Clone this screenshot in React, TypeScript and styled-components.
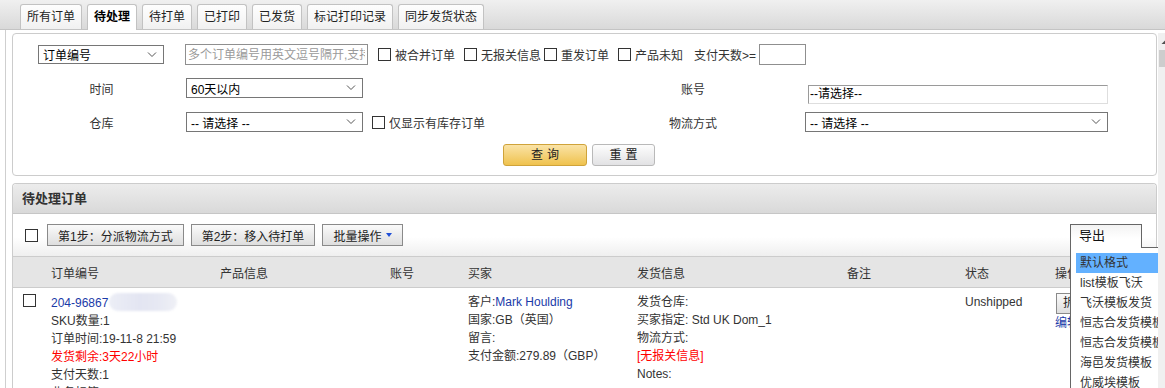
import styled, { createGlobalStyle } from 'styled-components';

const GlobalStyle = createGlobalStyle`
  html, body {
    margin: 0;
    padding: 0;
    background: #fff;
    overflow: hidden;
  }
  body {
    font-family: "Liberation Sans", "Noto Sans CJK SC", Arial, sans-serif;
    font-size: 12px;
    color: #333;
  }
  * { box-sizing: border-box; }
`;

const tabs = ['所有订单', '待处理', '待打单', '已打印', '已发货', '标记打印记录', '同步发货状态'];
const exportItems = ['默认格式', 'list模板飞沃', '飞沃模板发货', '恒志合发货模板', '恒志合发货模板', '海邑发货模板', '优威埃模板'];
const columns = ['', '订单编号', '产品信息', '账号', '买家', '发货信息', '备注', '状态', '操作'];

const Chevron = () => (
    <svg width="10" height="6" viewBox="0 0 10 6">
        <path d="M1 0.5 L5 4.5 L9 0.5" fill="none" stroke="#555" strokeWidth="1" />
    </svg>
);

const Select = ({ w, h, children }: { w: number; h: number; children: string }) => (
    <SelectBox $w={w} $h={h}>
        <span>{children}</span>
        <Chevron />
    </SelectBox>
);

const Check = ({ label, ml = 0 }: { label?: string; ml?: number }) => (
    <CheckItem $ml={ml}>
        <Box />
        {label && <span>{label}</span>}
    </CheckItem>
);

const App = () => {
    return (
        <Page>
            <GlobalStyle />
            <TabBar>
                {tabs.map((t, i) => (
                    <Tab key={t} $active={i === 1}>
                        {t}
                    </Tab>
                ))}
            </TabBar>
            <Main>
                <Content>
                    <SearchPanel>
                        <FirstRow>
                            <Select w={126} h={19}>订单编号</Select>
                            <TextInput
                                $w={183}
                                $ml={21}
                                placeholder="多个订单编号用英文逗号隔开,支持批量查询"
                            />
                            <Check label="被合并订单" ml={10} />
                            <Check label="无报关信息" ml={9} />
                            <Check label="重发订单" ml={3} />
                            <Check label="产品未知" ml={9} />
                            <PlainText $ml={11}>支付天数&gt;=</PlainText>
                            <TextInput $w={47} $ml={3} />
                        </FirstRow>
                        <FormGrid>
                            <Label>时间</Label>
                            <Field>
                                <Select w={177} h={20}>60天以内</Select>
                            </Field>
                            <Field />
                            <Label>账号</Label>
                            <Field>
                                <AccountInput>--请选择--</AccountInput>
                            </Field>
                            <Label>仓库</Label>
                            <Field>
                                <Select w={177} h={20}>-- 请选择 --</Select>
                            </Field>
                            <Field>
                                <Check label="仅显示有库存订单" />
                            </Field>
                            <Label>物流方式</Label>
                            <Field>
                                <Select w={303} h={20}>-- 请选择 --</Select>
                            </Field>
                        </FormGrid>
                        <ButtonRow>
                            <QueryButton>查询</QueryButton>
                            <ResetButton>重置</ResetButton>
                        </ButtonRow>
                    </SearchPanel>

                    <ListPanel>
                        <PanelHeader>待处理订单</PanelHeader>
                        <Toolbar>
                            <Check />
                            <ToolButton $ml={9}>第1步：分派物流方式</ToolButton>
                            <ToolButton $ml={7}>第2步：移入待打单</ToolButton>
                            <ToolButton $ml={7}>
                                批量操作
                                <Caret />
                            </ToolButton>
                        </Toolbar>
                        <ExportDropdown>
                            <ExportTab>导出</ExportTab>
                            <ExportMenu>
                                {exportItems.map((item, i) => (
                                    <MenuItem key={i} $active={i === 0}>
                                        {item}
                                    </MenuItem>
                                ))}
                            </ExportMenu>
                        </ExportDropdown>
                        <TableHead>
                            {columns.map((c, i) => (
                                <span key={i}>{c}</span>
                            ))}
                        </TableHead>
                        <TableRow>
                            <CheckCell>
                                <Check />
                            </CheckCell>
                            <Cell>
                                <div>
                                    <Link>204-96867</Link>
                                    <Blur />
                                </div>
                                <div>SKU数量:1</div>
                                <div>订单时间:19-11-8 21:59</div>
                                <Warn>发货剩余:3天22小时</Warn>
                                <div>支付天数:1</div>
                                <div>业务标签:</div>
                            </Cell>
                            <Cell />
                            <Cell />
                            <Cell>
                                <div>
                                    客户:<Link>Mark Houlding</Link>
                                </div>
                                <div>国家:GB（英国）</div>
                                <div>留言:</div>
                                <div>支付金额:279.89（GBP）</div>
                            </Cell>
                            <Cell>
                                <div>发货仓库:</div>
                                <div>买家指定: Std UK Dom_1</div>
                                <div>物流方式:</div>
                                <Warn>[无报关信息]</Warn>
                                <div>Notes:</div>
                            </Cell>
                            <Cell />
                            <Cell>Unshipped</Cell>
                            <Cell>
                                <OpButton>拆分订单</OpButton>
                                <Link>编辑</Link>
                            </Cell>
                        </TableRow>
                    </ListPanel>
                </Content>
                <Scrollbar>
                    <ScrollArrow>
                        <svg width="15" height="8" viewBox="0 0 15 8">
                            <path d="M3.5 6 L7.5 2 L11.5 6 Z" fill="#505050" />
                        </svg>
                    </ScrollArrow>
                    <Thumb />
                </Scrollbar>
            </Main>
        </Page>
    );
};

export default App;

const Page = styled.div`
    width: 1165px;
    height: 388px;
    overflow: hidden;
    display: flex;
    flex-direction: column;
`;
const TabBar = styled.div`
    height: 30px;
    flex: 0 0 30px;
    display: flex;
    align-items: flex-end;
    gap: 5px;
    padding: 4px 0 0 20px;
    background: linear-gradient(#f0f0f0, #d9d9d9);
    border-bottom: 1px solid #c4c4c4;
`;
const Tab = styled.div<{ $active: boolean }>`
    height: ${({ $active }) => ($active ? '26px' : '25px')};
    margin-bottom: ${({ $active }) => ($active ? '-1px' : '0')};
    padding: 0 6px;
    line-height: 24px;
    border: 1px solid #c2c2c2;
    border-bottom: none;
    border-radius: 3px 3px 0 0;
    background: ${({ $active }) => ($active ? '#fff' : 'linear-gradient(#fefefe, #f1f1f1)')};
    color: ${({ $active }) => ($active ? '#000' : '#222')};
    font-weight: ${({ $active }) => ($active ? 'bold' : 'normal')};
    white-space: nowrap;
`;
const Main = styled.div`
    flex: 1;
    display: flex;
    min-height: 0;
`;
const Content = styled.div`
    flex: 0 0 1153px;
    margin-left: 5px;
    border-left: 1px solid #cfcfcf;
    padding: 3px 0 0 6px;
    overflow: hidden;
`;
const Scrollbar = styled.div`
    flex: 0 0 15px;
    margin-top: 3px;
    background: #f0f0f0;
    display: flex;
    flex-direction: column;
`;
const ScrollArrow = styled.div`
    height: 17px;
    display: flex;
    align-items: center;
`;
const Thumb = styled.div`
    height: 17px;
    margin-left: 1px;
    background: #cdcdcd;
`;
const SearchPanel = styled.div`
    margin-right: 1px;
    border: 1px solid #cccccc;
    border-radius: 4px;
    padding: 10px 0 9px;
`;
const FirstRow = styled.div`
    height: 21px;
    display: flex;
    align-items: center;
    padding-left: 25px;
`;
const SelectBox = styled.div<{ $w: number; $h: number }>`
    width: ${({ $w }) => $w}px;
    height: ${({ $h }) => $h}px;
    border: 1px solid #767676;
    background: #fff;
    color: #000;
    padding: 0 6px 0 4px;
    display: flex;
    align-items: center;
    justify-content: space-between;
    span {
        white-space: nowrap;
    }
`;
const TextInput = styled.input<{ $w: number; $ml: number }>`
    width: ${({ $w }) => $w}px;
    height: 21px;
    margin: 0 0 0 ${({ $ml }) => $ml}px;
    padding: 0 2px;
    border: 1px solid #8f8f8f;
    font: inherit;
    color: #000;
    outline: none;
    &::placeholder {
        color: #9a9a9a;
    }
`;
const CheckItem = styled.label<{ $ml: number }>`
    display: inline-flex;
    align-items: center;
    gap: 4px;
    margin-left: ${({ $ml }) => $ml}px;
    color: #333;
    white-space: nowrap;
`;
const Box = styled.span`
    display: inline-block;
    width: 13px;
    height: 13px;
    border: 1px solid #333;
    background: #fff;
`;
const PlainText = styled.span<{ $ml: number }>`
    margin-left: ${({ $ml }) => $ml}px;
    white-space: nowrap;
`;
const FormGrid = styled.div`
    margin-top: 6px;
    display: grid;
    grid-template-columns: 173px 186px 205px 228px 303px;
    grid-auto-rows: 34px;
    align-items: center;
`;
const Label = styled.div`
    text-align: center;
    padding-left: 4px;
    color: #333;
`;
const Field = styled.div`
    display: flex;
    align-items: center;
`;
const AccountInput = styled.div`
    width: 300px;
    height: 19px;
    margin: 12px 0 0 3px;
    padding-left: 1px;
    line-height: 17px;
    color: #000;
    border: 1px solid #dedede;
    border-top-color: #9a9a9a;
    border-left-color: #9a9a9a;
`;
const ButtonRow = styled.div`
    margin-top: 5px;
    padding-left: 490px;
    display: flex;
    gap: 5px;
`;
const QueryButton = styled.div`
    width: 84px;
    height: 22px;
    line-height: 20px;
    text-align: center;
    letter-spacing: 4px;
    text-indent: 4px;
    color: #222;
    border: 1px solid #cfa33a;
    border-radius: 3px;
    background: linear-gradient(#fae3a6, #efc24e);
`;
const ResetButton = styled(QueryButton)`
    width: 63px;
    border-color: #b9b9b9;
    background: linear-gradient(#fdfdfd, #e2e2e4);
`;
const ListPanel = styled.div`
    position: relative;
    margin: 7px 1px 0 0;
    border: 1px solid #cccccc;
    border-radius: 4px 4px 0 0;
    border-bottom: none;
`;
const PanelHeader = styled.div`
    height: 30px;
    line-height: 29px;
    padding-left: 9px;
    font-size: 13px;
    font-weight: bold;
    color: #333;
    border-radius: 4px 4px 0 0;
    border-bottom: 1px solid #c6c6c6;
    background: linear-gradient(#ececec, #d9d9d9);
`;
const Toolbar = styled.div`
    height: 43px;
    display: flex;
    align-items: center;
    padding-left: 12px;
    border-bottom: 1px solid #cccccc;
    background: linear-gradient(#fff 55%, #efefef);
`;
const ToolButton = styled.div<{ $ml: number }>`
    height: 22px;
    margin-left: ${({ $ml }) => $ml}px;
    padding: 0 10px;
    display: flex;
    align-items: center;
    gap: 5px;
    color: #222;
    border: 1px solid #8a8a8a;
    background: linear-gradient(#fafafa, #dedede);
    white-space: nowrap;
`;
const Caret = styled.span`
    width: 0;
    height: 0;
    border-left: 3.5px solid transparent;
    border-right: 3.5px solid transparent;
    border-top: 4px solid #1f4fd8;
`;
const ExportDropdown = styled.div`
    position: absolute;
    top: 40px;
    left: 1057px;
    z-index: 5;
    display: flex;
    flex-direction: column;
`;
const ExportTab = styled.div`
    position: relative;
    z-index: 1;
    width: 72px;
    height: 24px;
    padding-left: 8px;
    line-height: 22px;
    font-size: 13px;
    color: #111;
    border: 1px solid #666;
    border-bottom: none;
    background: linear-gradient(#f3f3f3, #fff 60%);
`;
const ExportMenu = styled.div`
    width: 120px;
    height: 160px;
    margin-top: -1px;
    padding: 5px 0 0 5px;
    border: 1px solid #666;
    background: #fff;
`;
const MenuItem = styled.div<{ $active: boolean }>`
    height: 20px;
    line-height: 20px;
    padding-left: 4px;
    white-space: nowrap;
    color: #333;
    background: ${({ $active }) => ($active ? '#63b1ff' : 'transparent')};
`;
const grid = '38px 169px 170px 78px 169px 210px 118px 90px 101px';
const TableHead = styled.div`
    display: grid;
    grid-template-columns: ${grid};
    height: 31px;
    align-items: center;
    padding-top: 1px;
    background: #e5e5e5;
    border-bottom: 1px solid #cccccc;
    color: #333;
    white-space: nowrap;
`;
const TableRow = styled.div`
    display: grid;
    grid-template-columns: ${grid};
    padding-top: 5px;
    line-height: 18px;
    white-space: nowrap;
`;
const CheckCell = styled.div`
    padding: 1px 0 0 10px;
`;
const Cell = styled.div`
    color: #333;
    overflow: visible;
`;
const Link = styled.span`
    color: #1a3aa8;
`;
const Warn = styled.div`
    color: #ff0000;
`;
const Blur = styled.span`
    display: inline-block;
    width: 68px;
    height: 18px;
    margin-left: 1px;
    vertical-align: -4px;
    border-radius: 9px;
    background: linear-gradient(90deg, #eceef6, #e3e5f2 45%, #e6e8f3 70%, #eff0f6);
    filter: blur(1.2px);
`;
const OpButton = styled.div`
    width: 60px;
    height: 21px;
    margin-left: 1px;
    padding-left: 6px;
    line-height: 19px;
    color: #222;
    border: 1px solid #8a8a8a;
    background: linear-gradient(#fafafa, #dedede);
`;
